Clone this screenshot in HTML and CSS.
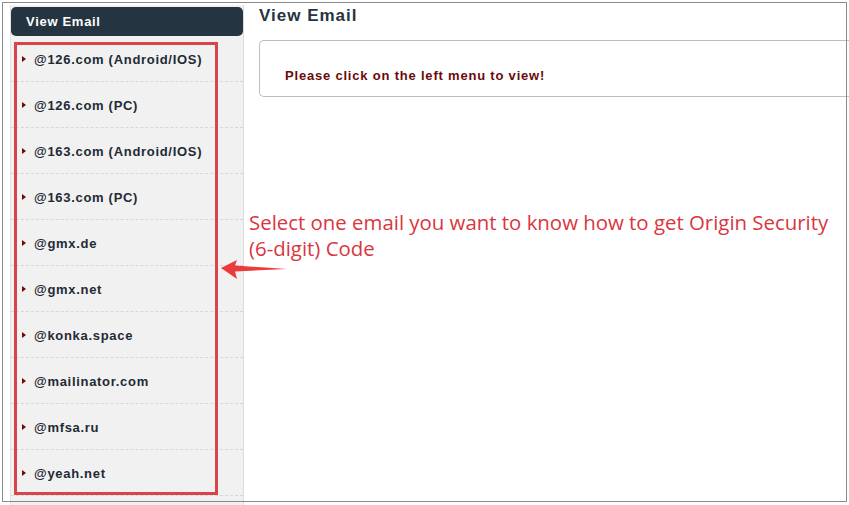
FILE: index.html
```html
<!DOCTYPE html>
<html lang="en">
<head>
    <meta charset="UTF-8">
    <meta name="viewport" content="width=device-width, initial-scale=1.0">
    <title>View Email</title>
    <link rel="stylesheet" href="styles.css">
</head>
<body>
    <div class="page">
        <div class="sidebar">
            <div class="side_title">View Email</div>
            <ul class="mail_list">
                <li><span class="caret"></span>@126.com (Android/IOS)</li>
                <li><span class="caret"></span>@126.com (PC)</li>
                <li><span class="caret"></span>@163.com (Android/IOS)</li>
                <li><span class="caret"></span>@163.com (PC)</li>
                <li><span class="caret"></span>@gmx.de</li>
                <li><span class="caret"></span>@gmx.net</li>
                <li><span class="caret"></span>@konka.space</li>
                <li><span class="caret"></span>@mailinator.com</li>
                <li><span class="caret"></span>@mfsa.ru</li>
                <li><span class="caret"></span>@yeah.net</li>
            </ul>
        </div>

        <div class="main">
            <h2 class="main_title">View Email</h2>
            <div class="notice">
                <p>Please click on the left menu to view!</p>
            </div>
        </div>
    </div>

    <!-- annotation layer -->
    <div class="mark_box"></div>
    <p class="mark_text">Select one email you want to know how to get Origin Security (6-digit) Code</p>
    <svg class="mark_arrow" width="70" height="24" viewBox="0 0 70 24">
        <polygon points="0,10 16,2 14,7.5 66,11 14,13.5 16,21" fill="#ec3b3f"/>
    </svg>
    <div class="frame"></div>
</body>
</html>
```

FILE: styles.css
```css
html, body{
    margin: 0;
    padding: 0;
    background: #fff;
    overflow: hidden;
}

body{
    font-family: "Liberation Sans", Arial, sans-serif;
    width: 849px;
    height: 505px;
    position: relative;
}

.page{
    display: flex;
    align-items: flex-start;
}

.sidebar{
    flex-shrink: 0;
    width: 232px;
    height: 498px;
    margin: 5px 0 0 10px;
    padding-top: 2px;
    background: #f1f1f1;
    border-left: 1px solid #e4e4e4;
    border-right: 1px solid #dcdcdc;
}

.side_title{
    height: 29px;
    line-height: 30px;
    padding-left: 15px;
    border-radius: 5px;
    background: #253441;
    color: #fff;
    font-size: 13px;
    font-weight: bold;
    letter-spacing: 0.7px;
}

.mail_list{
    list-style: none;
    margin: 0;
    padding: 0;
}

.mail_list li{
    display: flex;
    align-items: center;
    box-sizing: border-box;
    height: 46px;
    padding: 1px 0 0 11px;
    border-bottom: 1px dashed #d8d8d8;
    color: #1f2a35;
    font-size: 13px;
    font-weight: bold;
    letter-spacing: 0.7px;
}

.caret{
    width: 0;
    height: 0;
    border-top: 3.5px solid transparent;
    border-bottom: 3.5px solid transparent;
    border-left: 4px solid #6a0a0a;
    margin-right: 8px;
}

.main{
    flex: 1;
    margin-left: 15px;
    padding-top: 5px;
}

.main_title{
    margin: 0;
    height: 35px;
    color: #253441;
    font-size: 17px;
    font-weight: bold;
    line-height: 21px;
    letter-spacing: 1px;
}

.notice{
    height: 55px;
    border: 1px solid #bdbdbd;
    border-right: none;         /* 右端は画面外に続く */
    border-radius: 5px 0 0 5px;
    display: flex;
    align-items: center;
}

.notice p{
    margin: 14px 0 0 25px;
    color: #6b0a0a;
    font-size: 13px;
    font-weight: bold;
    letter-spacing: 0.8px;
}

/* 注釈 */
.mark_box{
    position: absolute;
    left: 14px;
    top: 42px;
    width: 198px;
    height: 447px;
    border: 3px solid #d9434a;
}

.mark_text{
    position: absolute;
    left: 249px;
    top: 209px;
    width: 595px;
    margin: 0;
    color: #d9363e;
    font-family: "Open Sans", "Noto Sans", sans-serif;
    font-size: 20.4px;
    line-height: 26px;
}

.mark_arrow{
    position: absolute;
    left: 221px;
    top: 258px;
}

.frame{
    position: absolute;
    left: 2px;
    top: 2px;
    width: 843px;
    height: 498px;
    border: 1px solid #8a8a8a;
    pointer-events: none;
}
```
